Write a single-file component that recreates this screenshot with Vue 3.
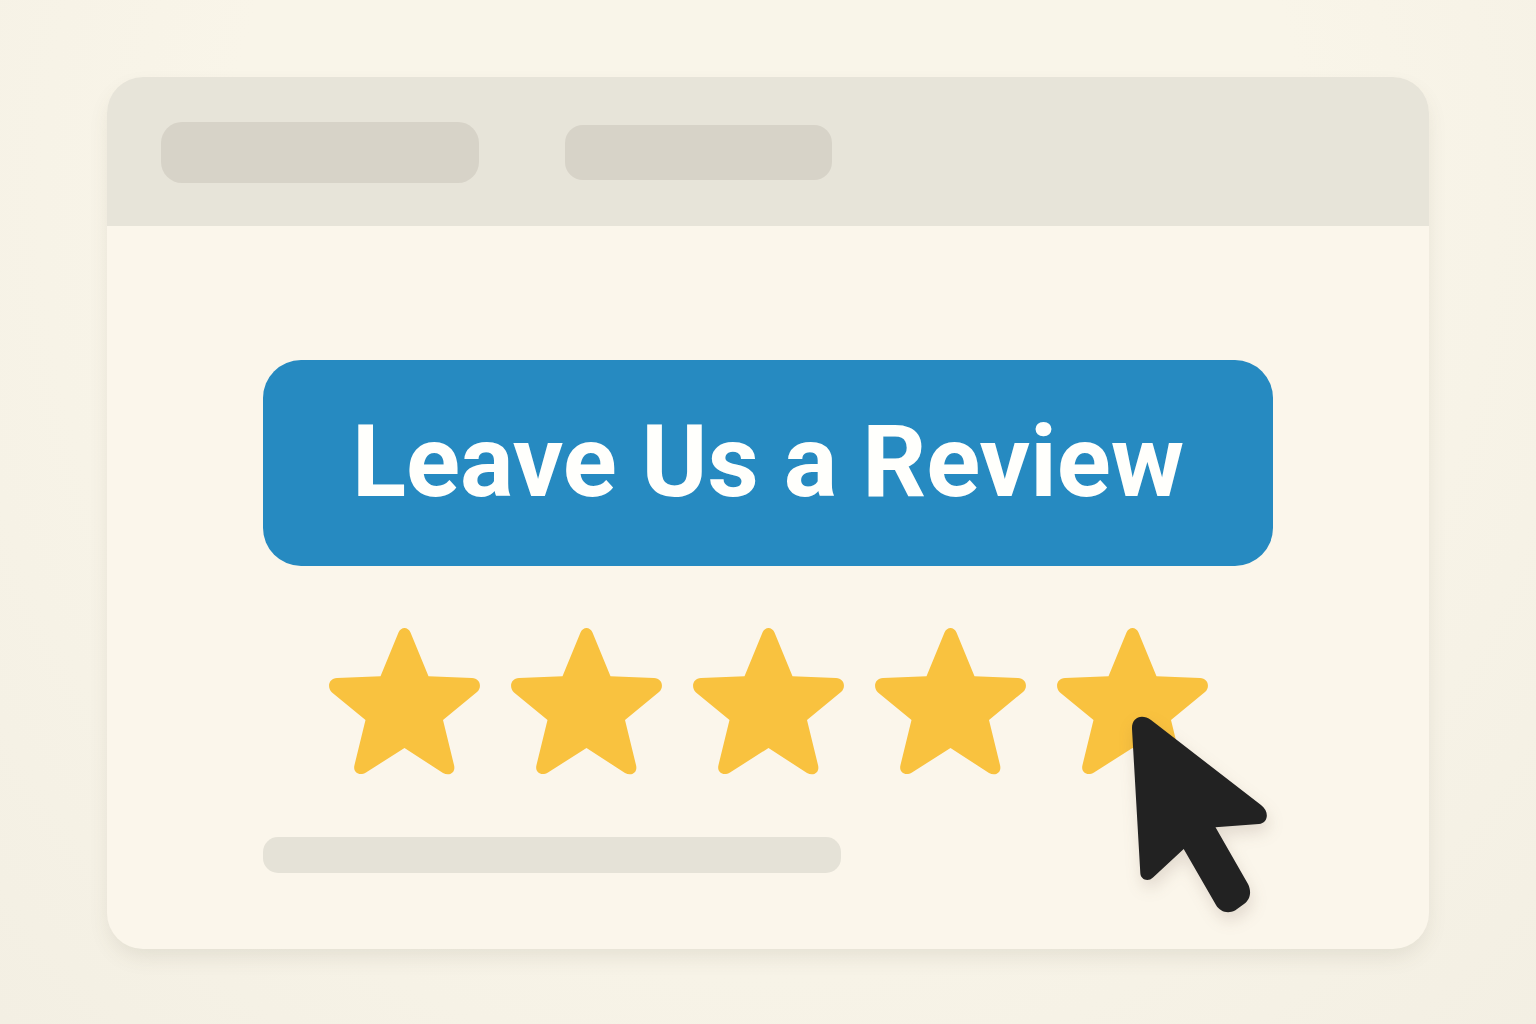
<template>
  <main class="page">
    <section class="window">
      <header class="window-bar">
        <span class="tab tab-large"></span>
        <span class="tab tab-small"></span>
      </header>

      <div class="content">
        <button type="button" class="review-button">Leave Us a Review</button>

        <div class="stars" role="group" aria-label="Rating">
          <div v-for="n in 5" :key="n" class="star-item">
            <button
              type="button"
              class="star"
              :aria-label="`${n} / 5`"
              :aria-pressed="rating === n"
              @click="rating = n"
            >
              <svg viewBox="0 0 151 147" aria-hidden="true">
                <path :d="starPath" />
              </svg>
            </button>
            <svg v-if="n === rating" class="cursor" viewBox="0 0 136 196" aria-hidden="true">
              <path :d="cursorPath" />
            </svg>
          </div>
        </div>

        <div class="line"></div>
      </div>
    </section>
  </main>
</template>

<script setup>
import { ref } from 'vue'

const rating = ref(5)

const starPath =
  'M69.5 4.5 C72 -1.5 79 -1.5 81.5 4.5 L99.5 48.3 L143 50 C151 50.3 153.5 59 148 64 ' +
  'L114 92 L125 137 C127 144.5 120.5 148.5 114 145 L75.5 120 L37 144.5 ' +
  'C30.5 148.5 23.5 144.5 25.5 137 L36.5 92 L3 64.5 C-2.5 59 0 50.3 8 50 L51.5 48.3 Z'

const cursorPath =
  'M0 12 C-0.5 0 10 -3.5 19 3 L129 88 C138 95 136 106 127 107 L83.5 110.3 ' +
  'L116 167 C120 175 118 183 112 187 L103 193.5 C96 197 88 195 84 188 ' +
  'L51.7 132 L21 160.5 C16 165.5 8.5 162.5 8.3 156 Z'
</script>

<style>
body {
  margin: 0;
  background: #f5f0e4;
}
</style>

<style scoped>
.page {
  box-sizing: border-box;
  min-height: 100vh;
  padding: 77px 107px 75px;
  background: radial-gradient(ellipse at 50% 20%, #f9f5e9 50%, #f3efe3 100%);
}

.window {
  border-radius: 36px;
  background: #fbf6eb;
  box-shadow: 0 10px 22px -4px rgba(90, 85, 60, 0.13);
}

.window-bar {
  display: flex;
  align-items: center;
  gap: 86px;
  box-sizing: border-box;
  height: 149px;
  padding: 2px 54px 0;
  border-radius: 36px 36px 0 0;
  background: #e7e4d9;
}

.tab {
  background: #d7d3c8;
}

.tab-large {
  width: 318px;
  height: 61px;
  border-radius: 21px;
}

.tab-small {
  width: 267px;
  height: 55px;
  border-radius: 18px;
}

.content {
  padding: 134px 156px 76px;
}

.review-button {
  display: block;
  width: 100%;
  height: 206px;
  padding: 0 0 2px;
  border: 0;
  border-radius: 38px;
  background: #268ac1;
  color: #fffffc;
  font-family: Roboto, "Liberation Sans", sans-serif;
  font-size: 100px;
  font-weight: 700;
  line-height: 120px;
  cursor: pointer;
}

.stars {
  display: flex;
  justify-content: center;
  gap: 31px;
  margin-top: 62px;
}

.star-item {
  position: relative;
}

.star {
  display: block;
  padding: 0;
  border: 0;
  background: none;
  cursor: pointer;
}

.star svg {
  display: block;
  width: 151px;
  height: 147px;
  fill: #f9c23f;
}

.cursor {
  position: absolute;
  top: 89px;
  left: 75px;
  width: 136px;
  height: 196px;
  overflow: visible;
  fill: #222;
  filter: drop-shadow(2px 8px 8px rgba(90, 60, 50, 0.15));
  pointer-events: none;
}

.line {
  width: 578px;
  max-width: 100%;
  height: 36px;
  margin-top: 62px;
  border-radius: 15px;
  background: #e5e2d7;
}
</style>
